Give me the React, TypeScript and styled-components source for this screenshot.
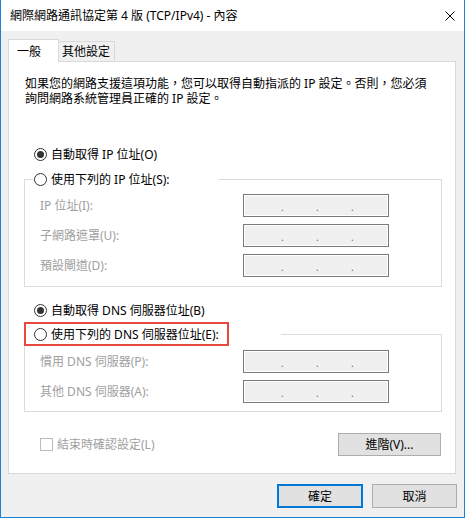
import styled, { createGlobalStyle } from "styled-components";

const GlobalStyle = createGlobalStyle`
  html, body {
    margin: 0;
    padding: 0;
    background: #fff;
  }
  body {
    font-family: "Noto Sans", "Noto Sans CJK TC", sans-serif;
    font-size: 12px;
    line-height: 15px;
    color: #000;
  }
  * {
    box-sizing: border-box;
  }
`;

const ipFields = ["IP 位址(I):", "子網路遮罩(U):", "預設閘道(D):"];
const dnsFields = ["慣用 DNS 伺服器(P):", "其他 DNS 伺服器(A):"];

function IpBox() {
  return (
    <IpInput>
      <Dot>.</Dot>
      <Dot>.</Dot>
      <Dot>.</Dot>
    </IpInput>
  );
}

function Radio({ checked, label }: { checked?: boolean; label: string }) {
  return (
    <RadioRow>
      <RadioCircle $checked={checked} />
      <span>{label}</span>
    </RadioRow>
  );
}

export default function App() {
  return (
    <>
      <GlobalStyle />
      <Window>
        <TitleBar>
          <span>網際網路通訊協定第 4 版 (TCP/IPv4) - 內容</span>
          <svg width="10" height="10" viewBox="0 0 10 10">
            <path d="M0.5 0.5L9.5 9.5M9.5 0.5L0.5 9.5" stroke="#000" strokeWidth="1" />
          </svg>
        </TitleBar>

        <Body>
          <TabStrip>
            <Tab $active $width={51}>一般</Tab>
            <Tab $width={56}>其他設定</Tab>
          </TabStrip>

          <Panel>
            <Intro>
              <IntroLine>如果您的網路支援這項功能，您可以取得自動指派的 IP 設定。否則，您必須</IntroLine>
              <IntroLine>詢問網路系統管理員正確的 IP 設定。</IntroLine>
            </Intro>

            <StandaloneRadio $top={40}>
              <Radio checked label="自動取得 IP 位址(O)" />
            </StandaloneRadio>

            <Group $top={9} $padTop={7} $padBottom={9}>
              <GroupLegend $shift={-6} $tail={49}>
                <Radio label="使用下列的 IP 位址(S):" />
              </GroupLegend>
              <FieldGrid>
                {ipFields.map((f) => (
                  <FieldRow key={f}>
                    <FieldLabel>{f}</FieldLabel>
                    <IpBox />
                  </FieldRow>
                ))}
              </FieldGrid>
            </Group>

            <StandaloneRadio $top={15}>
              <Radio checked label="自動取得 DNS 伺服器位址(B)" />
            </StandaloneRadio>

            <Group $top={4} $padTop={4} $padBottom={8}>
              <GroupLegend $shift={-16} $tail={52}>
                <Highlight>
                  <Radio label="使用下列的 DNS 伺服器位址(E):" />
                </Highlight>
              </GroupLegend>
              <FieldGrid>
                {dnsFields.map((f) => (
                  <FieldRow key={f}>
                    <FieldLabel>{f}</FieldLabel>
                    <IpBox />
                  </FieldRow>
                ))}
              </FieldGrid>
            </Group>

            <OptionsRow>
              <CheckRow>
                <CheckBox />
                <FieldLabel>結束時確認設定(L)</FieldLabel>
              </CheckRow>
              <Button $width={103} $height={23}>進階(V)...</Button>
            </OptionsRow>
          </Panel>

          <Footer>
            <Button $primary $width={86} $height={24}>確定</Button>
            <Button $width={85} $height={24}>取消</Button>
          </Footer>
        </Body>
      </Window>
    </>
  );
}

const Window = styled.div`
  width: 465px;
  height: 518px;
  display: flex;
  flex-direction: column;
  border: 1px solid #1883d7;
  border-top: none;
  background: #f0f0f0;
`;

const TitleBar = styled.div`
  height: 31px;
  flex-shrink: 0;
  display: flex;
  align-items: center;
  justify-content: space-between;
  padding: 0 9px 0 9px;
  background: #fff;
`;

const Body = styled.div`
  flex: 1;
  display: flex;
  flex-direction: column;
  padding: 8px 8px 0 7px;
`;

const TabStrip = styled.div`
  display: flex;
  align-items: flex-end;
  height: 23px;
  margin-bottom: -1px;
  position: relative;
  z-index: 1;
`;

const Tab = styled.div<{ $active?: boolean; $width: number }>`
  width: ${(p) => p.$width}px;
  height: ${(p) => (p.$active ? 23 : 20)}px;
  margin-bottom: ${(p) => (p.$active ? 0 : 1)}px;
  padding-left: ${(p) => (p.$active ? 8 : 3)}px;
  display: flex;
  align-items: center;
  background: ${(p) => (p.$active ? "#fff" : "#f0f0f0")};
  border: 1px solid #d9d9d9;
  border-bottom: none;
  ${(p) => (!p.$active ? "border-left: none;" : "")}
`;

const Panel = styled.div`
  height: 413px;
  background: #fff;
  border: 1px solid #d9d9d9;
  padding: 14px 12px 0 15px;
  display: flex;
  flex-direction: column;
  align-items: flex-start;
`;

const Intro = styled.div`
  margin-left: 1px;
  display: flex;
  flex-direction: column;
`;

const IntroLine = styled.span`
  height: 15px;
  line-height: 15px;
  white-space: nowrap;
`;

const StandaloneRadio = styled.div<{ $top: number }>`
  margin: ${(p) => p.$top}px 0 0 10px;
`;

const RadioRow = styled.div`
  display: flex;
  align-items: center;
  gap: 4px;
  height: 16px;
  white-space: nowrap;
`;

const RadioCircle = styled.span<{ $checked?: boolean }>`
  width: 13px;
  height: 13px;
  flex-shrink: 0;
  border-radius: 50%;
  border: 1px solid #333;
  background: #fff;
  display: flex;
  align-items: center;
  justify-content: center;

  &::after {
    content: "";
    display: ${(p) => (p.$checked ? "block" : "none")};
    width: 7px;
    height: 7px;
    border-radius: 50%;
    background: #333;
  }
`;

const Group = styled.fieldset<{ $top: number; $padTop: number; $padBottom: number }>`
  width: 418px;
  margin: ${(p) => p.$top}px 0 0 0;
  padding: ${(p) => p.$padTop}px 0 ${(p) => p.$padBottom}px 15px;
  border: 1px solid #dcdcdc;
  min-width: 0;
`;

const GroupLegend = styled.legend<{ $shift: number; $tail: number }>`
  margin-left: ${(p) => p.$shift}px;
  padding: 0 ${(p) => p.$tail}px 0 0;
`;

const Highlight = styled.div`
  border: 2px solid #e8483f;
  padding: 2px 8px 2px 8px;
`;

const FieldGrid = styled.div`
  display: flex;
  flex-direction: column;
  gap: 7px;
`;

const FieldRow = styled.div`
  display: grid;
  grid-template-columns: 203px 146px;
  align-items: center;
`;

const FieldLabel = styled.span`
  color: #a0a0a0;
  white-space: nowrap;
`;

const IpInput = styled.div`
  height: 23px;
  display: flex;
  align-items: center;
  gap: 33px;
  padding: 0 0 0 37px;
  border: 1px solid #7a7a7a;
  box-shadow: inset 0 0 0 1px #fff;
  background: #f0f0f0;
`;

const Dot = styled.span`
  width: 2px;
  font-size: 10px;
  line-height: 10px;
  color: #6d6d6d;
  position: relative;
  top: 1px;
`;

const OptionsRow = styled.div`
  width: 418px;
  margin-top: 21px;
  padding: 0 1px 0 16px;
  display: flex;
  align-items: center;
  justify-content: space-between;
`;

const CheckRow = styled.div`
  display: flex;
  align-items: center;
  gap: 4px;
`;

const CheckBox = styled.span`
  width: 13px;
  height: 13px;
  border: 1px solid #bcbcbc;
  background: #fff;
`;

const Button = styled.div<{ $primary?: boolean; $width: number; $height: number }>`
  width: ${(p) => p.$width}px;
  height: ${(p) => p.$height}px;
  display: flex;
  align-items: center;
  justify-content: center;
  background: #e1e1e1;
  border: ${(p) => (p.$primary ? "2px solid #0078d7" : "1px solid #adadad")};
`;

const Footer = styled.div`
  display: flex;
  justify-content: flex-end;
  gap: 9px;
  margin: 10px -1px 0 0;
`;
